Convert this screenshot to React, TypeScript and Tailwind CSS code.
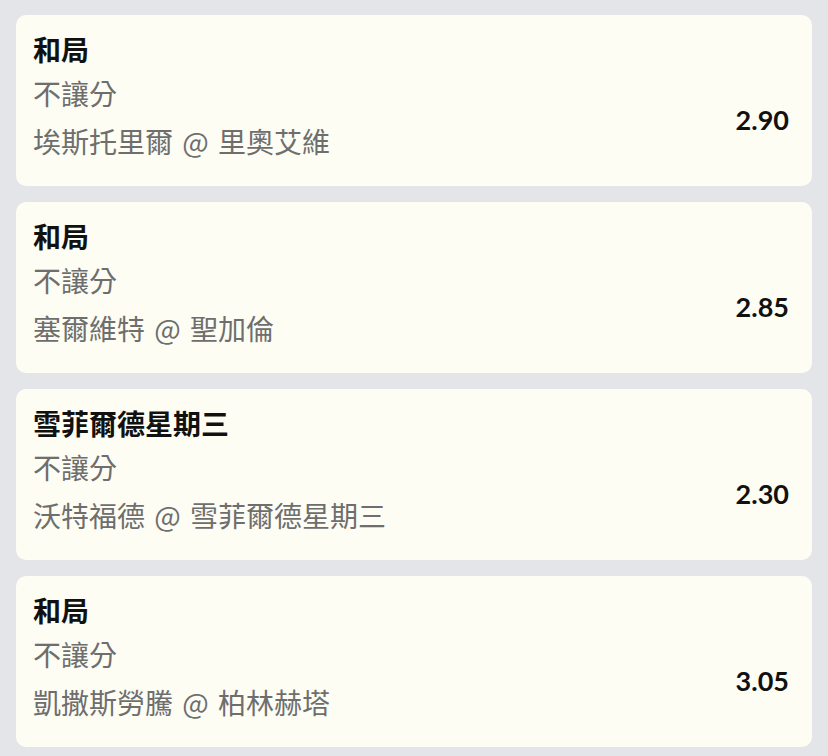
import React from "react";

type Bet = {
  pick: string;
  market: string;
  match: string;
  odds: string;
};

const bets: Bet[] = [
  { pick: "和局", market: "不讓分", match: "埃斯托里爾 @ 里奧艾維", odds: "2.90" },
  { pick: "和局", market: "不讓分", match: "塞爾維特 @ 聖加倫", odds: "2.85" },
  { pick: "雪菲爾德星期三", market: "不讓分", match: "沃特福德 @ 雪菲爾德星期三", odds: "2.30" },
  { pick: "和局", market: "不讓分", match: "凱撒斯勞騰 @ 柏林赫塔", odds: "3.05" },
];

const BetCard: React.FC<{ bet: Bet }> = ({ bet }) => (
  <div className="rounded-[10px] bg-[#fdfdf3] pt-4 pb-[21px] pl-[17px] pr-[23px]">
    <p className="text-[28px] leading-[38px] font-bold text-[#111111]">{bet.pick}</p>
    <div className="flex items-center justify-between">
      <div className="text-[28px] leading-[48px] text-[#6e6e6e] font-['Noto_Sans_CJK_TC',sans-serif]">
        <p>{bet.market}</p>
        <p className="[word-spacing:3px]">{bet.match}</p>
      </div>
      <span className="mt-[6px] text-[27px] font-bold text-[#111111] font-['Lato',sans-serif]">
        {bet.odds}
      </span>
    </div>
  </div>
);

const App: React.FC = () => {
  return (
    <main className="min-h-screen bg-[#e4e5e9] px-4 pt-[15px] font-['Lato','Noto_Sans_CJK_TC',sans-serif]">
      <div className="flex flex-col gap-4">
        {bets.map((bet, i) => (
          <BetCard key={i} bet={bet} />
        ))}
      </div>
    </main>
  );
};

export default App;
